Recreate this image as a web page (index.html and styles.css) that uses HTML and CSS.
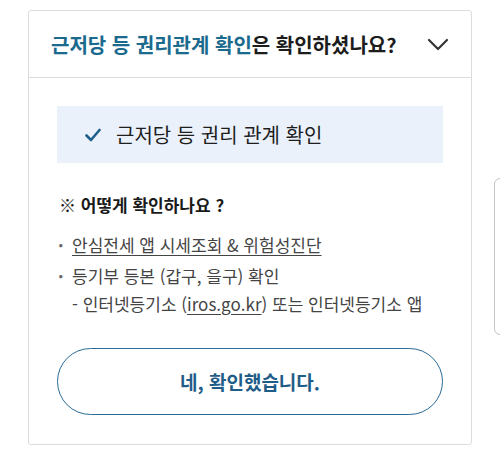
FILE: index.html
```html
<!DOCTYPE html>
<html lang="ko">
<head>
<meta charset="utf-8">
<link rel="stylesheet" href="styles.css">
</head>
<body>
<section class="card">
  <header class="card-head">
    <h2 class="title"><span class="accent">근저당 등 권리관계 확인</span>은 확인하셨나요?</h2>
    <svg class="chevron" width="22" height="14" viewBox="0 0 22 14"><path d="M2 2 L11 11 L20 2" fill="none" stroke="#333" stroke-width="2.2" stroke-linecap="round" stroke-linejoin="round"/></svg>
  </header>
  <div class="card-body">
    <div class="checked">
      <svg class="check" width="16" height="14" viewBox="0 0 16 14"><path d="M1.5 7.5 L6 12 L14.5 2" fill="none" stroke="#1f5f8a" stroke-width="2.6" stroke-linecap="round" stroke-linejoin="round"/></svg>
      <span>근저당 등 권리 관계 확인</span>
    </div>
    <p class="how">※ 어떻게 확인하나요 ?</p>
    <ul class="steps">
      <li><a class="link">안심전세 앱 시세조회 &amp; 위험성진단</a></li>
      <li>등기부 등본 (갑구, 을구) 확인<br>- 인터넷등기소 (<a class="link">iros.go.kr</a>) 또는 인터넷등기소 앱</li>
    </ul>
    <button class="confirm">네, 확인했습니다.</button>
  </div>
</section>
<div class="scroll-handle"></div>
</body>
</html>
```
FILE: styles.css
```css
html, body {
  margin: 0;
  padding: 0;
  background: #fff;
  font-family: "Noto Sans CJK KR", "Noto Sans", sans-serif;
  color: #222;
}
.card {
  margin: 10px 0 0 28px;
  width: 442px;
  border: 1px solid #dcdcdc;
  border-radius: 3px;
  background: #fff;
}
.card-head {
  height: 66px;
  display: flex;
  align-items: center;
  justify-content: space-between;
  padding: 0 22px 0 22px;
  border-bottom: 1px solid #dcdcdc;
}
.title {
  margin: 0;
  font-size: 20px;
  font-weight: 700;
  color: #1c1c1c;
}
.accent { color: #1a6a8e; }
.chevron { display: block; margin-top: 2px; }
.card-body {
  padding: 28px 28px 29px 28px;
}
.checked {
  height: 57px;
  background: #eaf1fb;
  display: flex;
  align-items: center;
  padding-left: 28px;
  gap: 15px;
  font-size: 20px;
  color: #1e1e1e;
}
.check { display: block; }
.how {
  margin: 30px 0 0 2px;
  font-size: 17px;
  line-height: 24px;
  font-weight: 700;
  color: #1a1a1a;
}
.steps {
  list-style: none;
  margin: 14px 0 0 0;
  padding: 0;
  font-size: 17px;
  line-height: 28px;
  color: #444;
}
.steps li {
  position: relative;
  padding-left: 15px;
}
.steps li + li { margin-top: 3px; }
.steps li::before {
  content: "·";
  position: absolute;
  left: 1px;
  top: 0;
  color: #666;
  font-weight: 700;
}
.link {
  text-decoration: underline;
  text-underline-offset: 3px;
  color: #444;
}
.confirm {
  display: block;
  width: 100%;
  height: 67px;
  margin-top: 30px;
  border: 1.5px solid #2a6c97;
  border-radius: 34px;
  background: #fff;
  font-family: inherit;
  font-size: 19px;
  font-weight: 700;
  color: #1f5d88;
}
.scroll-handle {
  position: absolute;
  left: 494px;
  top: 178px;
  width: 20px;
  height: 155px;
  border: 1px solid #c4c4c4;
  border-radius: 6px;
  background: #fff;
}
```
